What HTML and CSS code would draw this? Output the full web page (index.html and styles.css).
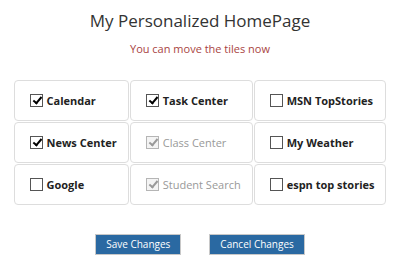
FILE: index.html
```html
<!DOCTYPE html>
<html lang="en">

<head>
    <meta charset="UTF-8">
    <title>My Personalized HomePage</title>
    <link rel="stylesheet" href="styles.css">
</head>

<body>
    <div class="page">
        <h2 class="title">My Personalized HomePage</h2>
        <p class="notice">You can move the tiles now</p>

        <table class="tiles">
            <tr>
                <td><label class="tile"><span class="box checked"></span>Calendar</label></td>
                <td><label class="tile"><span class="box checked"></span>Task Center</label></td>
                <td><label class="tile"><span class="box"></span>MSN TopStories</label></td>
            </tr>
            <tr>
                <td><label class="tile"><span class="box checked"></span>News Center</label></td>
                <td><label class="tile disabled"><span class="box checked"></span>Class Center</label></td>
                <td><label class="tile"><span class="box"></span>My Weather</label></td>
            </tr>
            <tr>
                <td><label class="tile"><span class="box"></span>Google</label></td>
                <td><label class="tile disabled"><span class="box checked"></span>Student Search</label></td>
                <td><label class="tile"><span class="box"></span>espn top stories</label></td>
            </tr>
        </table>

        <div class="actions">
            <button class="btn">Save Changes</button>
            <button class="btn">Cancel Changes</button>
        </div>
    </div>
</body>

</html>
```

FILE: styles.css
```css
* {
    margin: 0;
    padding: 0;
    box-sizing: border-box;
}

body {
    font-family: "Open Sans", Arial, sans-serif;
    color: #333;
    background: #fff;
}

.page {
    width: 400px;
    padding-top: 9px;
    text-align: center;
}

.title {
    font-size: 17px;
    font-weight: 400;
    line-height: 24px;
    color: #333;
}

.notice {
    font-size: 11px;
    line-height: 16px;
    margin-top: 8px;
    color: #a94442;
}

/* Tile grid */
.tiles {
    margin: 22px auto 0;
    border-collapse: separate;
    border-spacing: 1px;
}

.tiles td {
    border: 1px solid #ddd;
    border-radius: 4px;
    padding: 11px 11px 11px 15px;
    text-align: left;
    white-space: nowrap;
}

.tile {
    display: flex;
    align-items: center;
    font-size: 11px;
    font-weight: 700;
    line-height: 17px;
    color: #222;
}

.tile.disabled {
    color: #999;
    font-weight: 400;
}

.box {
    width: 13px;
    height: 13px;
    margin-right: 4px;
    border: 1px solid #555;
    background: #fff;
    position: relative;
}

.box.checked::after {
    content: "";
    position: absolute;
    left: 4px;
    top: 0px;
    width: 3px;
    height: 7px;
    border: solid #000;
    border-width: 0 2px 2px 0;
    transform: rotate(40deg);
}

.tile.disabled .box {
    border-color: #b5b5b5;
    background: #f4f4f4;
}

.tile.disabled .box.checked::after {
    border-color: #999;
}

/* Buttons */
.actions {
    display: flex;
    justify-content: center;
    gap: 28px;
    margin-top: 28px;
}

.btn {
    font-family: "Open Sans", Arial, sans-serif;
    font-size: 10px;
    line-height: 19px;
    height: 21px;
    padding: 0 10px;
    color: #fff;
    background: #2a69a2;
    border: 1px solid #c8c8c8;
    cursor: pointer;
}
```
